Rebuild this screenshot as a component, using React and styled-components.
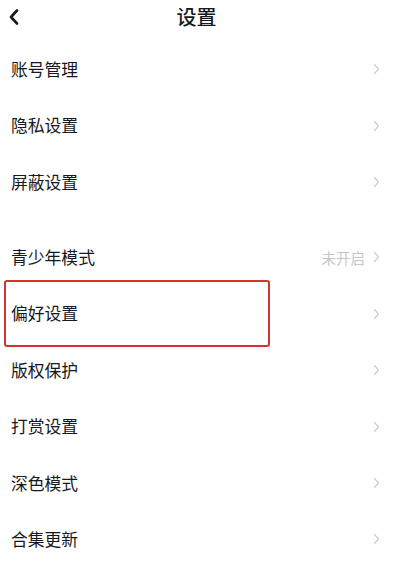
import React from "react";
import styled, { createGlobalStyle } from "styled-components";

const Global = createGlobalStyle`
  html, body { margin: 0; padding: 0; background: #fff; }
  body { font-family: "Noto Sans CJK SC", "Noto Sans", sans-serif; color: #161823; }
`;

const Page = styled.div`
  width: 393px;
  height: 561px;
  overflow: hidden;
  background: #fff;
  display: flex;
  flex-direction: column;
`;

const Header = styled.div`
  height: 41px;
  display: flex;
  align-items: flex-start;
  justify-content: center;
  position: relative;
  flex-shrink: 0;
`;

const BackButton = styled.div`
  position: absolute;
  left: 8px;
  top: 8px;
  width: 12px;
  height: 18px;
  display: flex;
  align-items: center;
  justify-content: center;
`;

const Title = styled.div`
  font-size: 20px;
  font-weight: 500;
  line-height: 1;
  margin-top: 7px;
`;

const Group = styled.div`
  display: flex;
  flex-direction: column;
  margin-top: ${(p) => p.$gap || 0}px;
`;

const Row = styled.div`
  position: relative;
  height: 56.4px;
  display: flex;
  align-items: center;
  padding: 0 13px 0 11px;
  flex-shrink: 0;
`;

const Label = styled.div`
  flex: 1;
  font-size: 16.8px;
  line-height: 1;
`;

const Extra = styled.div`
  font-size: 14.5px;
  color: #c5c6c9;
  margin-right: 8px;
`;

const Highlight = styled.div`
  position: absolute;
  left: 4px;
  top: -6px;
  width: 266px;
  height: 67px;
  box-sizing: border-box;
  border: 2.5px solid #d8322f;
  border-radius: 3px;
  pointer-events: none;
`;

const Chevron = () => (
  <svg width="7" height="12" viewBox="0 0 7 12">
    <path d="M1.5 1.5 L5.5 6 L1.5 10.5" fill="none" stroke="#cfd0d3" strokeWidth="1.4" strokeLinecap="round" strokeLinejoin="round" />
  </svg>
);

const Item = ({ label, extra, highlight }) => (
  <Row>
    <Label>{label}</Label>
    {extra && <Extra>{extra}</Extra>}
    <Chevron />
    {highlight && <Highlight />}
  </Row>
);

export default function App() {
  return (
    <Page>
      <Global />
      <Header>
        <BackButton>
          <svg width="10" height="16" viewBox="0 0 10 16">
            <path d="M8 1.5 L2 8 L8 14.5" fill="none" stroke="#161823" strokeWidth="2.6" strokeLinecap="round" strokeLinejoin="round" />
          </svg>
        </BackButton>
        <Title>设置</Title>
      </Header>
      <Group>
        <Item label="账号管理" />
        <Item label="隐私设置" />
        <Item label="屏蔽设置" />
      </Group>
      <Group $gap={19}>
        <Item label="青少年模式" extra="未开启" />
        <Item label="偏好设置" highlight />
        <Item label="版权保护" />
        <Item label="打赏设置" />
        <Item label="深色模式" />
        <Item label="合集更新" />
      </Group>
    </Page>
  );
}
